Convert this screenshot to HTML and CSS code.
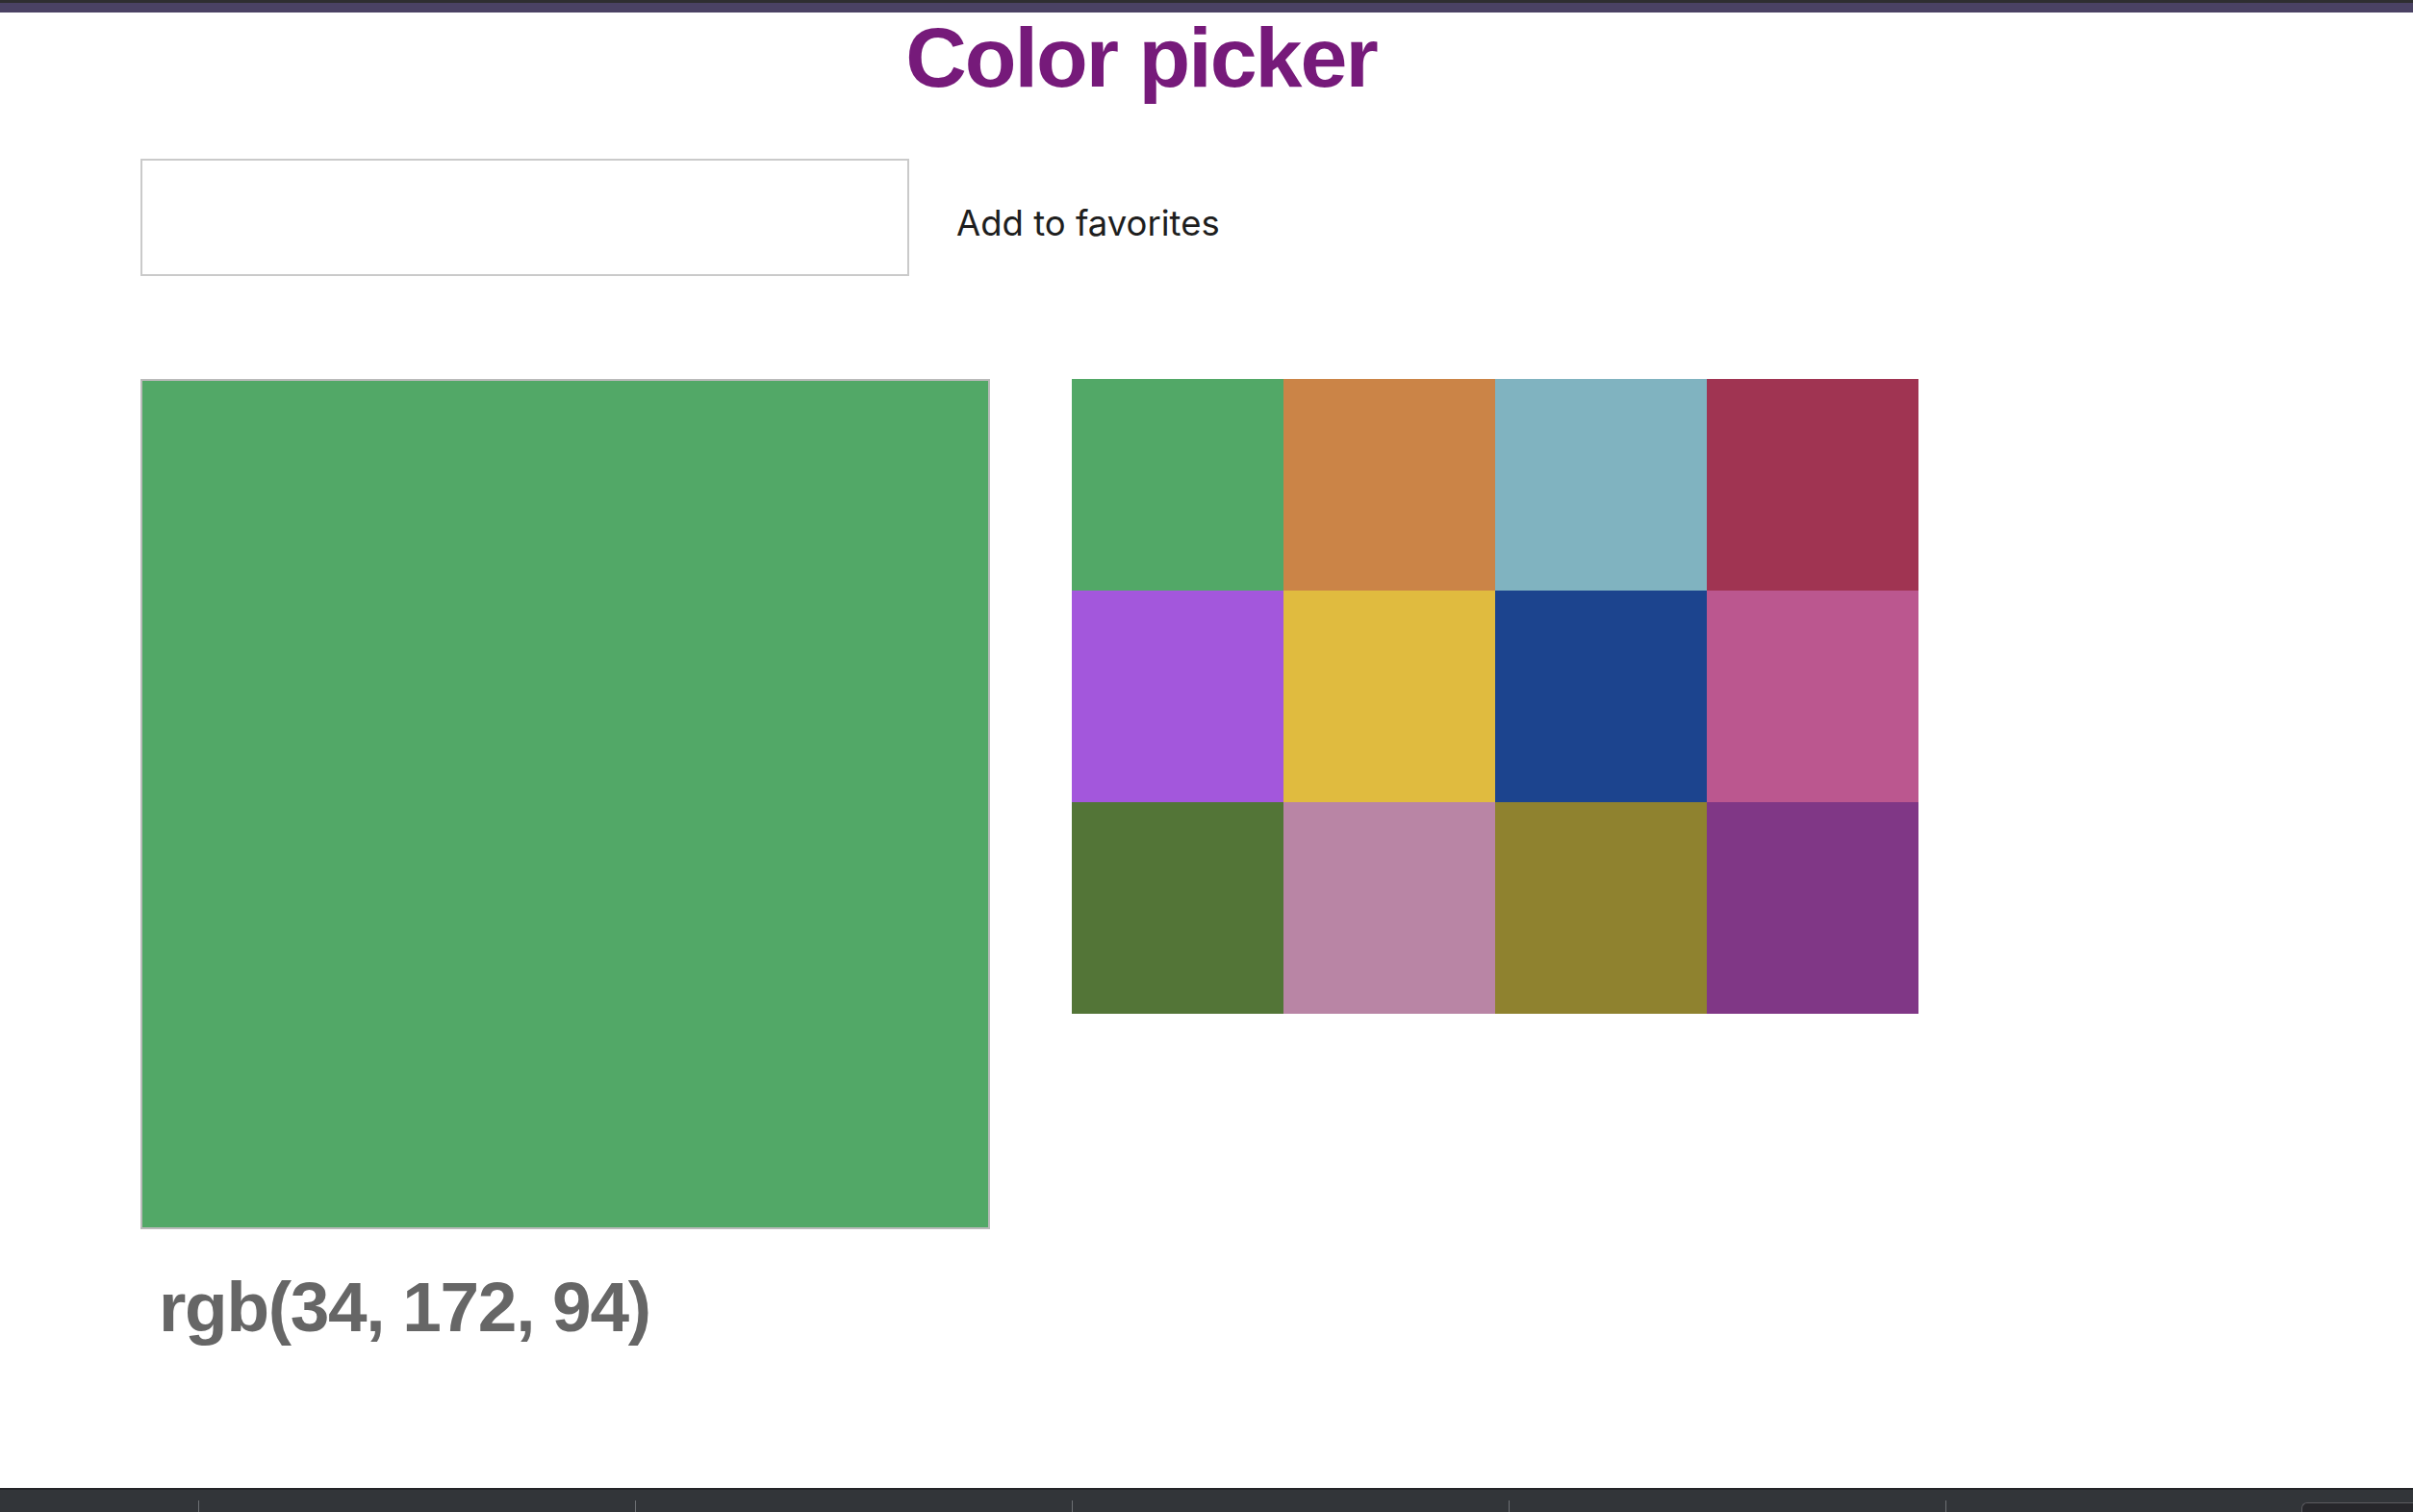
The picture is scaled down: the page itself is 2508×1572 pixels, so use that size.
FILE: index.html
```html
<!DOCTYPE html>
<html lang="en">
<head>
<meta charset="utf-8">
<title>Color picker</title>
<link rel="stylesheet" href="styles.css">
</head>
<body>
<div class="topbar"></div>
<main class="app">
  <h1 class="title">Color picker</h1>
  <div class="controls">
    <input class="color-input" type="text">
    <button class="fav-btn">Add to favorites</button>
  </div>
  <div class="picker">
    <div class="preview-col">
      <div class="preview" style="background:#52a867"></div>
      <p class="rgb">rgb(34, 172, 94)</p>
    </div>
    <div class="swatches">
      <div class="swatch" style="background:#52a867"></div>
      <div class="swatch" style="background:#cb8447"></div>
      <div class="swatch" style="background:#80b3c0"></div>
      <div class="swatch" style="background:#a03452"></div>
      <div class="swatch" style="background:#a357dc"></div>
      <div class="swatch" style="background:#e0bb3f"></div>
      <div class="swatch" style="background:#1c448e"></div>
      <div class="swatch" style="background:#bb578f"></div>
      <div class="swatch" style="background:#537537"></div>
      <div class="swatch" style="background:#b985a5"></div>
      <div class="swatch" style="background:#8f822f"></div>
      <div class="swatch" style="background:#803786"></div>
    </div>
  </div>
</main>
<footer class="statusbar">
  <div class="seg"></div>
  <div class="seg"></div>
  <div class="seg"></div>
  <div class="seg"></div>
  <div class="tick"></div>
  <div class="corner-box"></div>
</footer>
</body>
</html>
```

FILE: styles.css
```css
html, body {
  margin: 0;
  padding: 0;
}
body {
  height: 1572px;
  display: flex;
  flex-direction: column;
  background: #ffffff;
  font-family: "Liberation Sans", Arial, sans-serif;
  overflow: hidden;
}
.topbar {
  height: 10px;
  border-top: 3px solid #2e2e31;
  background: #4a4264;
  flex: none;
}
.app {
  flex: 1;
  padding: 0 282px 0 146px;
}
.title {
  margin: 3px 0 0;
  font-family: "Liberation Sans", Arial, sans-serif;
  font-weight: 700;
  font-size: 88px;
  line-height: 88px;
  letter-spacing: -2px;
  color: #761a7a;
  text-align: center;
}
.controls {
  margin-top: 61px;
  display: flex;
  align-items: center;
}
.color-input {
  box-sizing: border-box;
  width: 799px;
  height: 122px;
  margin: 0;
  padding: 0 16px;
  border: 2px solid #cacaca;
  border-radius: 0;
  background: #fff;
  font-size: 36px;
  outline: none;
}
.fav-btn {
  margin: 12px 0 0 49px;
  padding: 0;
  border: none;
  background: none;
  font-family: Inter, "Noto Sans", sans-serif;
  font-size: 36.5px;
  color: #1e1e1e;
  cursor: pointer;
}
.picker {
  margin-top: 107px;
  display: flex;
  align-items: flex-start;
  gap: 85px;
}
.preview-col {
  display: flex;
  flex-direction: column;
}
.preview {
  box-sizing: border-box;
  width: 883px;
  height: 884px;
  border: 2px solid #bababa;
}
.rgb {
  margin: 44px 0 0;
  padding-left: 19px;
  font-family: "Liberation Sans", Arial, sans-serif;
  font-weight: 700;
  font-size: 73px;
  line-height: 1;
  letter-spacing: -1.3px;
  color: #666666;
}
.swatches {
  display: grid;
  grid-template-columns: repeat(4, 220px);
  grid-auto-rows: 220px;
}
.statusbar {
  flex: none;
  height: 23px;
  border-top: 2px solid #242528;
  background: #323539;
  display: flex;
  align-items: flex-end;
  padding-left: 206px;
}
.seg {
  width: 453px;
  height: 12px;
  border-left: 1px solid #6d7074;
  flex: none;
}
.tick {
  width: 0;
  height: 12px;
  border-left: 1px solid #6d7074;
  flex: none;
}
.corner-box {
  margin-left: auto;
  width: 115px;
  height: 9px;
  border-top: 1px solid #5b5b60;
  border-left: 1px solid #5b5b60;
  border-top-left-radius: 6px;
  background: #27272b;
}
```
